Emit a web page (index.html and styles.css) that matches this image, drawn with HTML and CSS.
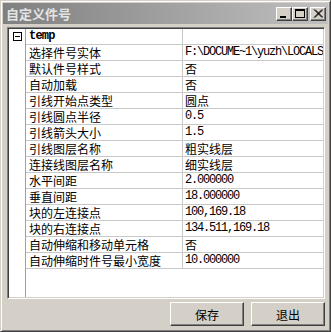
FILE: index.html
```html
<!DOCTYPE html>
<html lang="zh">
<head>
<meta charset="utf-8">
<title>自定义件号</title>
<link rel="stylesheet" href="styles.css">
</head>
<body>
<div class="window">
  <div class="titlebar">
    <span class="title">自定义件号</span>
    <div class="caption-btns">
      <span class="cbtn"><svg width="10" height="9" viewBox="0 0 10 9"><rect x="1" y="7" width="6" height="2" fill="#000"/></svg></span>
      <span class="cbtn"><svg width="10" height="9" viewBox="0 0 10 9"><rect x="0.5" y="0.5" width="9" height="8" fill="none" stroke="#000"/><rect x="0" y="0" width="10" height="2" fill="#000"/></svg></span>
      <span class="cbtn close"><svg width="10" height="9" viewBox="0 0 10 9"><path d="M1 0.5 L9 8.5 M2 0.5 L10 8.5 M9 0.5 L1 8.5 M10 0.5 L2 8.5" stroke="#000" stroke-width="1" fill="none"/></svg></span>
    </div>
  </div>
  <div class="body">
    <div class="panel">
      <div class="gutter"><span class="toggle"></span></div>
      <div class="grid">
        <div class="row"><div class="cell label"><b class="group">temp</b></div><div class="cell value"></div></div>
        <div class="row"><div class="cell label">选择件号实体</div><div class="cell value num">F:\DOCUME~1\yuzh\LOCALS</div></div>
        <div class="row"><div class="cell label">默认件号样式</div><div class="cell value">否</div></div>
        <div class="row"><div class="cell label">自动加载</div><div class="cell value">否</div></div>
        <div class="row"><div class="cell label">引线开始点类型</div><div class="cell value">圆点</div></div>
        <div class="row"><div class="cell label">引线圆点半径</div><div class="cell value num">0.5</div></div>
        <div class="row"><div class="cell label">引线箭头大小</div><div class="cell value num">1.5</div></div>
        <div class="row"><div class="cell label">引线图层名称</div><div class="cell value">粗实线层</div></div>
        <div class="row"><div class="cell label">连接线图层名称</div><div class="cell value">细实线层</div></div>
        <div class="row"><div class="cell label">水平间距</div><div class="cell value num">2.000000</div></div>
        <div class="row"><div class="cell label">垂直间距</div><div class="cell value num">18.000000</div></div>
        <div class="row"><div class="cell label">块的左连接点</div><div class="cell value num">100,169.18</div></div>
        <div class="row"><div class="cell label">块的右连接点</div><div class="cell value num">134.511,169.18</div></div>
        <div class="row"><div class="cell label">自动伸缩和移动单元格</div><div class="cell value">否</div></div>
        <div class="row"><div class="cell label">自动伸缩时件号最小宽度</div><div class="cell value num">10.000000</div></div>
      </div>
    </div>
    <div class="actions">
      <button class="btn">保存</button>
      <button class="btn">退出</button>
    </div>
  </div>
</div>
</body>
</html>
```
FILE: styles.css
```css
html, body {
  margin: 0;
  padding: 0;
  background: #d4d0c8;
}
body {
  width: 331px;
  height: 332px;
  overflow: hidden;
  font-family: "Noto Sans CJK SC", "Liberation Sans", sans-serif;
  font-size: 12px;
  color: #000;
}
.window {
  box-sizing: border-box;
  width: 331px;
  height: 332px;
  border: 1px solid;
  border-color: #d4d0c8 #404040 #404040 #d4d0c8;
  box-shadow: inset 1px 1px #ffffff, inset -1px -1px #808080;
  padding: 2px;
  background: #d4d0c8;
  display: flex;
  flex-direction: column;
}
.titlebar {
  height: 21px;
  display: flex;
  align-items: center;
  justify-content: space-between;
  padding: 0 2px 0 3px;
  background: linear-gradient(to right, #808080, #c0c0c0);
}
.title {
  color: #e4e4e4;
  font-size: 13px;
  font-weight: bold;
  line-height: 21px;
}
.caption-btns {
  display: flex;
  align-items: center;
}
.cbtn {
  box-sizing: border-box;
  width: 16px;
  height: 14px;
  background: #d4d0c8;
  border: 1px solid;
  border-color: #ffffff #404040 #404040 #ffffff;
  box-shadow: inset -1px -1px #808080;
  display: flex;
  align-items: center;
  justify-content: center;
}
.cbtn svg { display: block; }
.close { margin-left: 2px; }
.body {
  display: flex;
  flex-direction: column;
  padding: 3px 0 0 4px;
}
.panel {
  box-sizing: border-box;
  width: 318px;
  height: 272px;
  border: 1px solid;
  border-color: #808080 #ffffff #ffffff #808080;
  box-shadow: inset 1px 1px #404040, inset -1px -1px #d4d0c8;
  padding: 1px;
  background: #fff;
  display: flex;
}
.gutter {
  width: 16px;
  flex: none;
  border-right: 1px solid #a0a0a0;
  background: #fff;
}
.toggle {
  display: block;
  box-sizing: border-box;
  width: 9px;
  height: 9px;
  margin: 3px 0 0 4px;
  border: 1px solid #000;
  position: relative;
}
.toggle::after {
  content: "";
  position: absolute;
  left: 1px;
  top: 3px;
  width: 5px;
  height: 1px;
  background: #000;
}
.grid {
  flex: 1;
  display: flex;
  flex-direction: column;
  background: #fff;
}
.row {
  display: grid;
  grid-template-columns: 157px 140px;
  height: 16px;
  border-bottom: 1px solid #c8c8c8;
  box-sizing: border-box;
}
.cell {
  height: 15px;
  line-height: 15px;
  white-space: nowrap;
}
.label {
  border-right: 1px solid #c8c8c8;
  padding-left: 3px;
}
.value {
  padding-left: 2px;
  overflow: hidden;
}
.num {
  font-family: "Liberation Mono", monospace;
  letter-spacing: -1.2px;
}
.group {
  display: inline-block;
  vertical-align: top;
  height: 14px;
  margin-top: 1px;
  font-family: "Liberation Mono", monospace;
  font-weight: bold;
  font-size: 12px;
  line-height: 13px;
  letter-spacing: -0.8px;
}
.actions {
  display: flex;
  justify-content: flex-end;
  gap: 7px;
  width: 318px;
  margin-top: 3px;
}
.btn {
  box-sizing: border-box;
  width: 74px;
  height: 24px;
  margin: 0;
  padding: 0;
  background: #d4d0c8;
  border: 1px solid;
  border-color: #ffffff #404040 #404040 #ffffff;
  box-shadow: inset -1px -1px #808080;
  font-family: "Noto Sans CJK SC", "Liberation Sans", sans-serif;
  font-size: 12px;
  color: #000;
}
```
